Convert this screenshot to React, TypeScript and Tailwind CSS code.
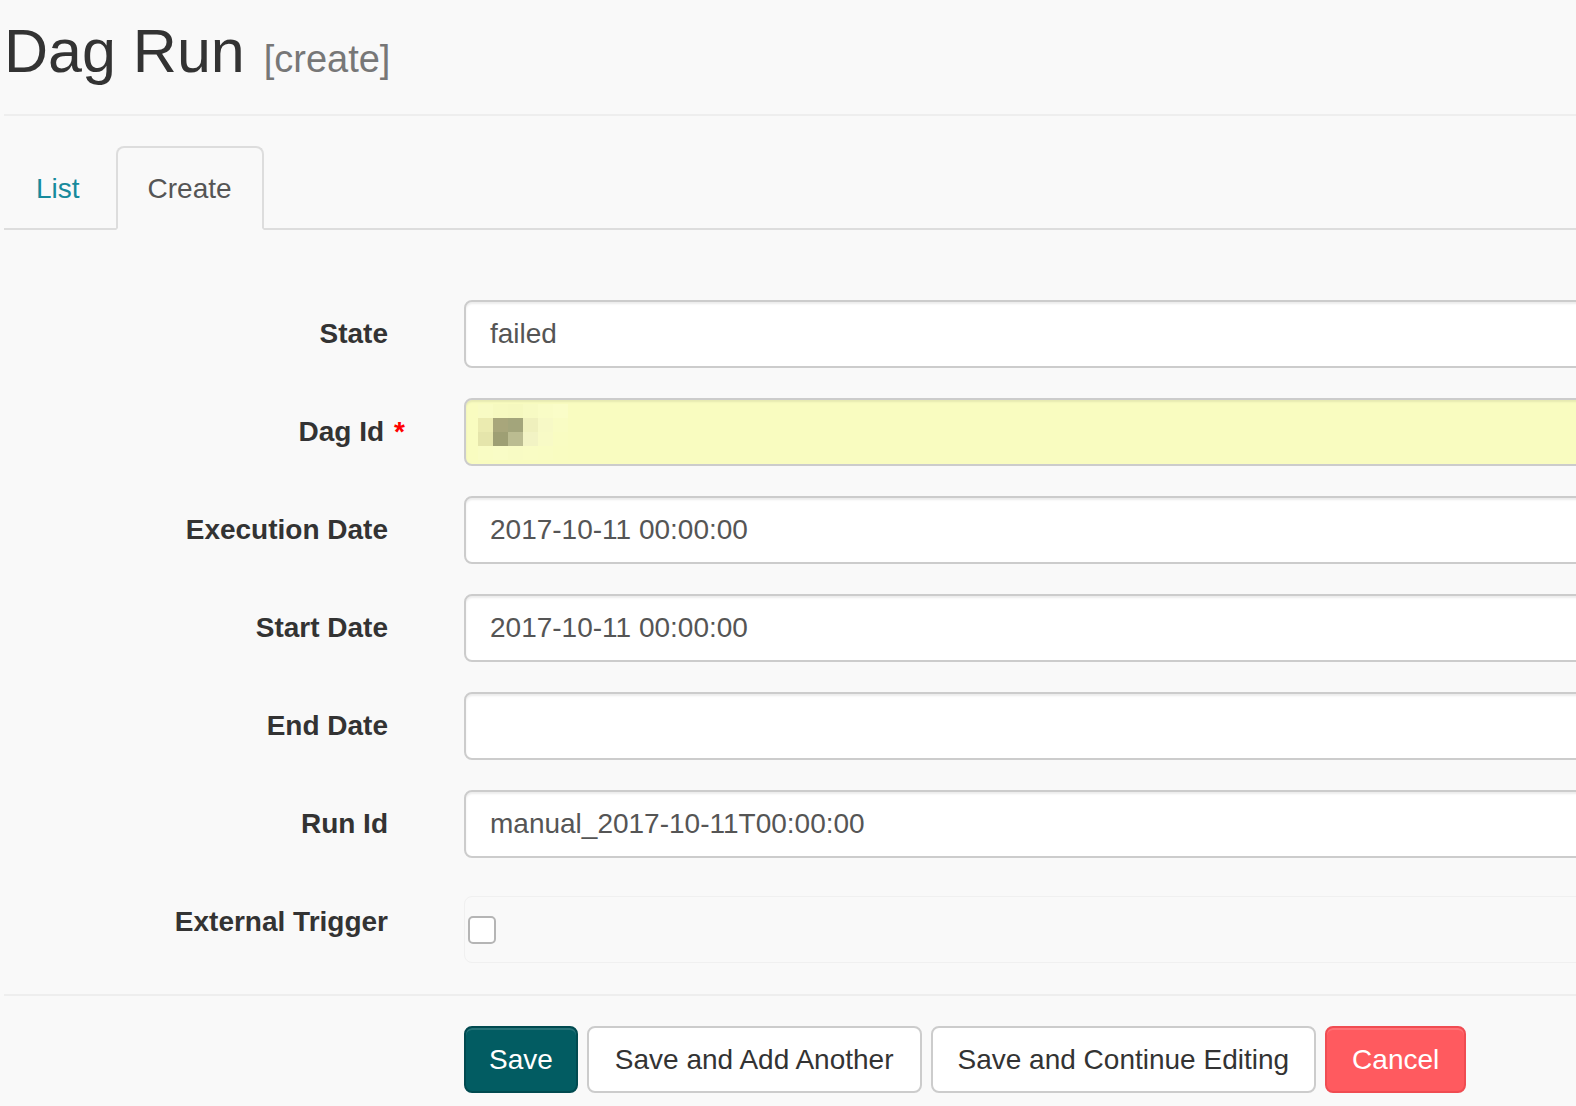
import React from 'react'

const font = { fontFamily: '"Liberation Sans", Arial, Helvetica, sans-serif' }

const blur = [
	['#f8fbc4', '#f6f9c0', '#f5f8bf', '#f7fac3', '#f9fcc6', '#fafdc8'],
	['#ebebb0', '#a8a67b', '#a3a57b', '#eff0bd', '#f7f9c6', '#f9fcc4'],
	['#e5e5ab', '#9e9f74', '#bbbc91', '#f2f3c4', '#f8fac6', '#f9fcc2'],
	['#f9fcc4', '#f9fcc6', '#f8fbc4', '#f9fcc4', '#f9fcc3', '#f9fcc1'],
]

const Label = ({ children, required }: { children: React.ReactNode; required?: boolean }) => (
	<div className="pt-[14px] text-right text-[28px] leading-[40px] font-bold text-[#333]">
		{children}
		{required && <span className="-mr-[17px] ml-[10px] text-[#ff0000]">*</span>}
	</div>
)

const Field = ({ value, yellow, children }: { value?: string; yellow?: boolean; children?: React.ReactNode }) => (
	<div
		className={
			'flex h-[68px] items-center rounded-[8px] border-2 border-[#ccc] px-[24px] text-[28px] text-[#555] shadow-[inset_0_2px_2px_rgba(0,0,0,0.075)] ' +
			(yellow ? 'bg-[#f9fcc0] pl-[12px]' : 'bg-white')
		}
	>
		{value}
		{children}
	</div>
)

export default function App() {
	const rows: [string, string, boolean?][] = [
		['State', 'failed'],
		['Dag Id', '', true],
		['Execution Date', '2017-10-11 00:00:00'],
		['Start Date', '2017-10-11 00:00:00'],
		['End Date', ''],
		['Run Id', 'manual_2017-10-11T00:00:00'],
	]
	return (
		<div className="min-h-screen w-full overflow-hidden bg-[#f9f9f9] pl-[4px]" style={font}>
			{/* header */}
			<div className="border-b-2 border-[#eee] pb-[30px]">
				<h1 className="mt-[18px] h-[66px] text-[61px] leading-[66px] text-[#333]">
					Dag Run <span className="ml-[2px] text-[38px] leading-none text-[#777]">[create]</span>
				</h1>
			</div>

			{/* tabs */}
			<ul className="mt-[30px] flex border-b-2 border-[#ddd]">
				<li className="-mb-[2px] mr-[4px] rounded-t-[8px] border-2 border-transparent px-[30px] pt-[21px] pb-[19px] text-[28px] leading-[40px] text-[#178a9c]">
					List
				</li>
				<li className="-mb-[2px] rounded-t-[8px] border-2 border-[#ddd] border-b-[#f9f9f9] bg-[#f9f9f9] px-[30px] pt-[21px] pb-[19px] text-[28px] leading-[40px] text-[#555]">
					Create
				</li>
			</ul>

			{/* form */}
			<div className="-mr-[120px] grid grid-cols-[384px_1fr] gap-x-[76px] pt-[70px]">
				{rows.map(([label, value, req]) => (
					<React.Fragment key={label}>
						<div className="mb-[30px]">
							<Label required={req}>{label}</Label>
						</div>
						<div className="mb-[30px]">
							{req ? (
								<Field yellow>
									<div className="grid grid-cols-[repeat(6,15px)] grid-rows-[repeat(4,14px)]">
										{blur.flat().map((c, i) => (
											<div key={i} style={{ backgroundColor: c }} />
										))}
									</div>
								</Field>
							) : (
								<Field value={value} />
							)}
						</div>
					</React.Fragment>
				))}
				<Label>External Trigger</Label>
				<div className="mt-[8px] h-[67px] rounded-[8px] border border-[#f0f0f0] pl-[3px] pt-[19px]">
					<div className="h-[28px] w-[28px] rounded-[5px] border-2 border-[#b5b5b5] bg-white" />
				</div>
			</div>

			<div className="mt-[31px] border-t-2 border-[#eee]" />

			{/* buttons */}
			<div className="ml-[460px] mt-[30px] flex gap-[9px] text-[28px] leading-[40px]">
				<button className="h-[67px] rounded-[8px] border-2 border-[#014a50] bg-[#025c62] px-[23px] text-white shadow-[inset_0_2px_0_rgba(255,255,255,0.15)]">
					Save
				</button>
				<button className="h-[67px] rounded-[8px] border-2 border-[#ccc] bg-white px-[26px] text-[#333]">
					Save and Add Another
				</button>
				<button className="h-[67px] rounded-[8px] border-2 border-[#ccc] bg-white px-[25px] text-[#333]">
					Save and Continue Editing
				</button>
				<button className="h-[67px] rounded-[8px] border-2 border-[#f04c52] bg-[#ff5a5f] px-[25px] text-white shadow-[inset_0_2px_0_rgba(255,255,255,0.15)]">
					Cancel
				</button>
			</div>
		</div>
	)
}
